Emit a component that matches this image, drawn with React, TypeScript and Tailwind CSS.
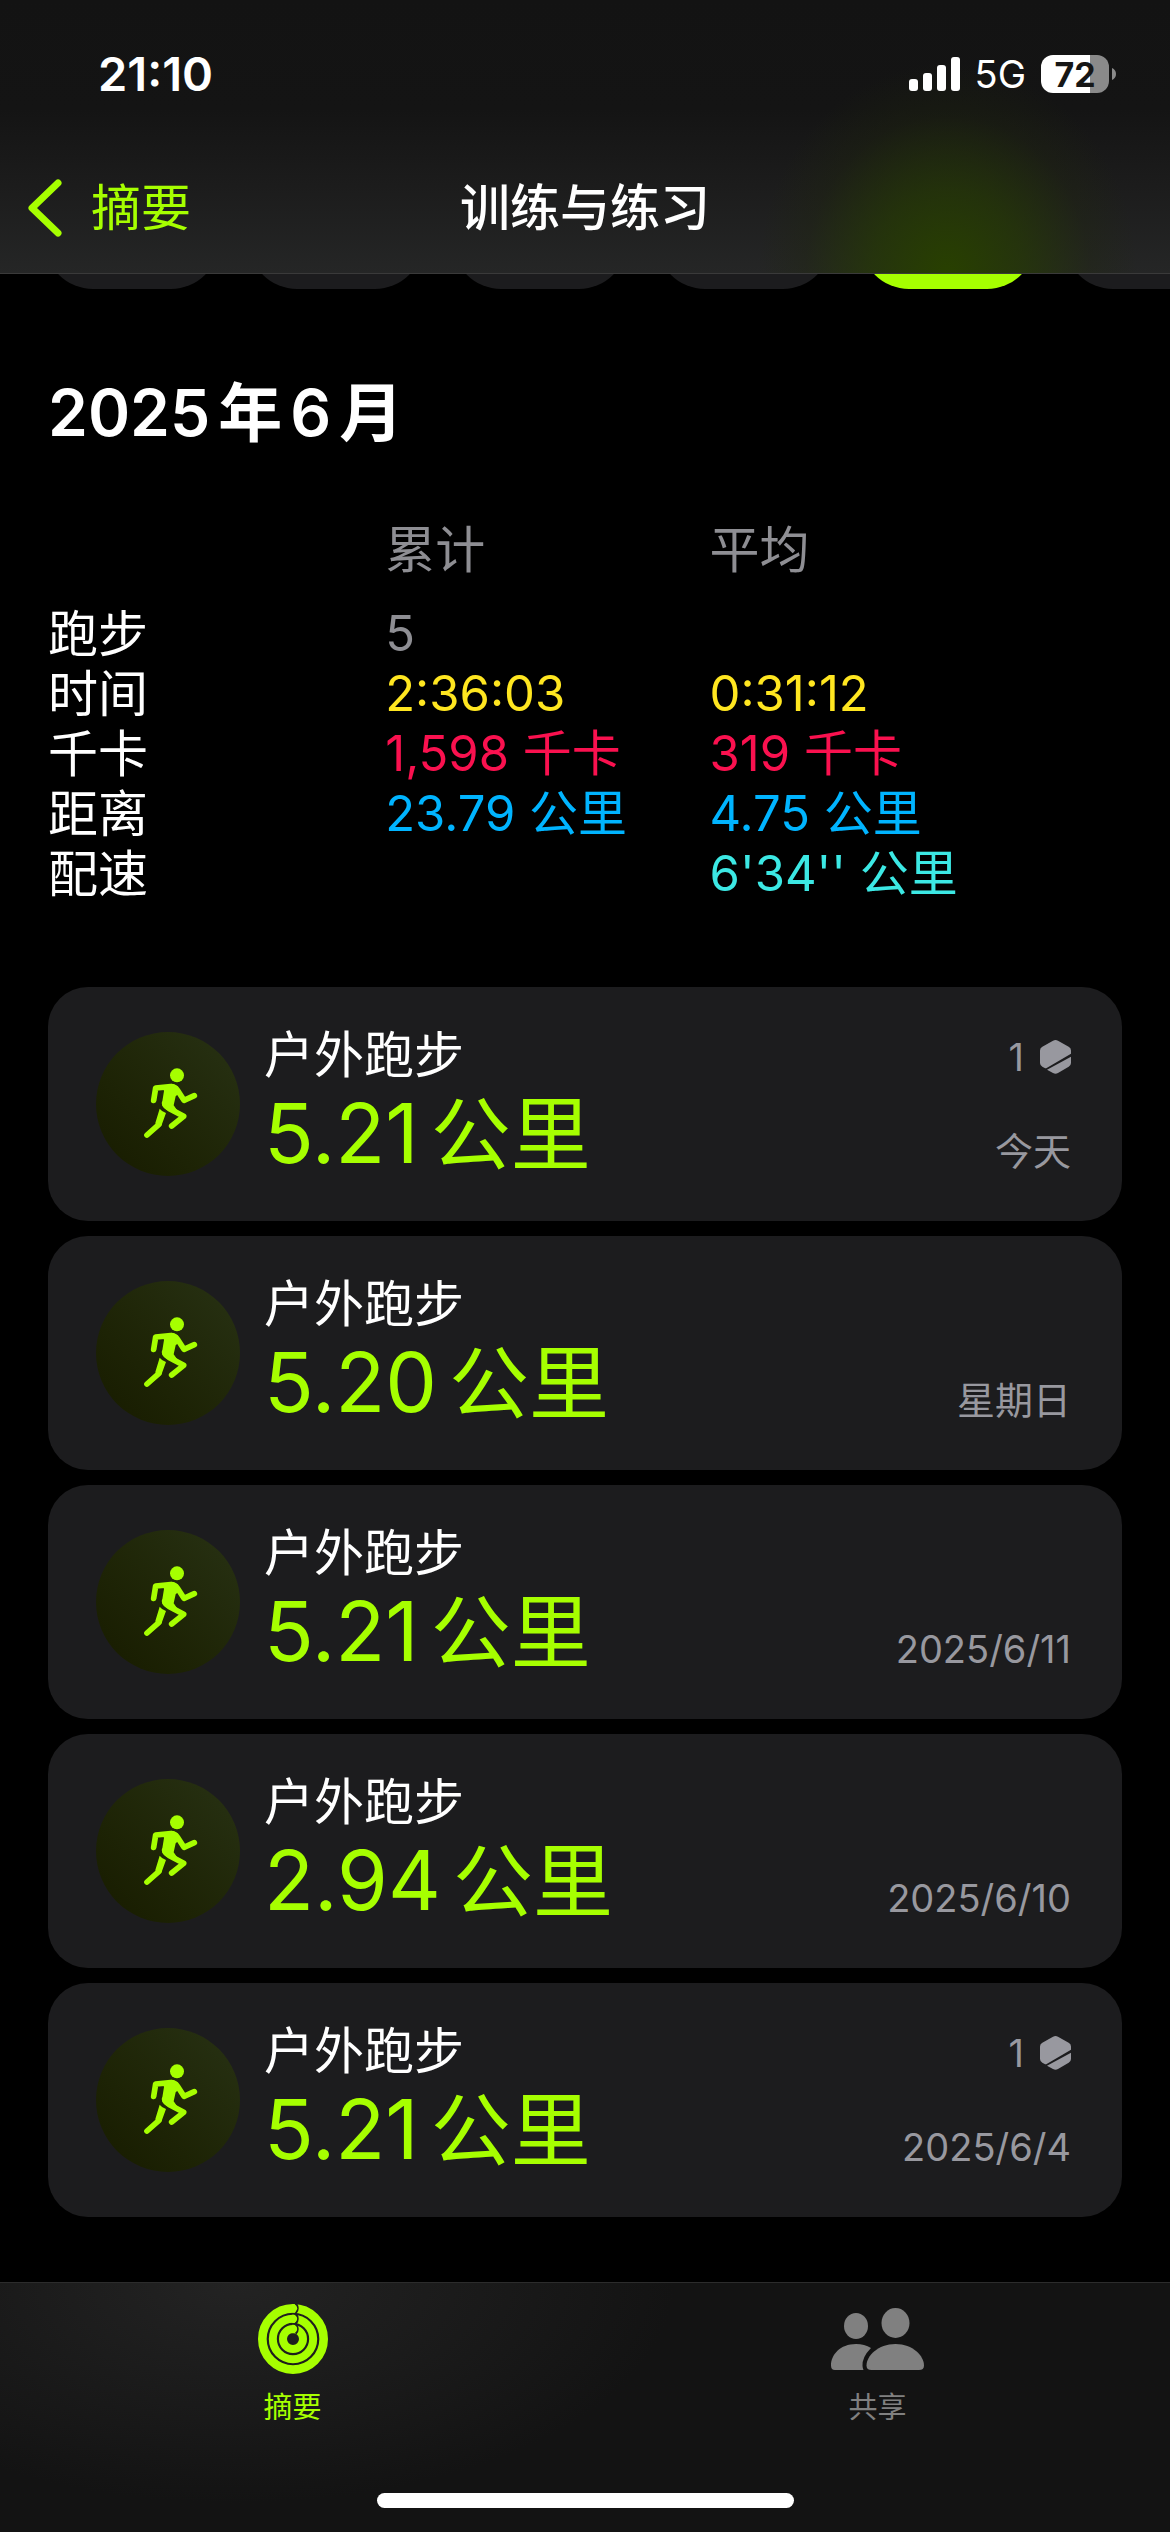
import clsx from "clsx";

type Workout = {
  id: number;
  distance: string;
  date: string;
  awards?: number;
};

const filters = [
  { id: 1, active: false },
  { id: 2, active: false },
  { id: 3, active: false },
  { id: 4, active: false },
  { id: 5, active: true },
  { id: 6, active: false },
];

const stats = [
  { label: "跑步", total: "5", average: "", color: "text-[#8e8e93]" },
  { label: "时间", total: "2:36:03", average: "0:31:12", color: "text-[#ffe620]" },
  { label: "千卡", total: "1,598 千卡", average: "319 千卡", color: "text-[#fa114f]" },
  { label: "距离", total: "23.79 公里", average: "4.75 公里", color: "text-[#00b4ff]" },
  { label: "配速", total: "", average: "6'34'' 公里", color: "text-[#3ce8e4]" },
];

const workouts: Workout[] = [
  { id: 1, distance: "5.21", date: "今天", awards: 1 },
  { id: 2, distance: "5.20", date: "星期日" },
  { id: 3, distance: "5.21", date: "2025/6/11" },
  { id: 4, distance: "2.94", date: "2025/6/10" },
  { id: 5, distance: "5.21", date: "2025/6/4", awards: 1 },
];

const SignalIcon = () => (
  <svg className="h-[34px] w-[51px]" viewBox="0 0 51 34" fill="currentColor">
    <rect x="0" y="22" width="9" height="12" rx="3" />
    <rect x="14" y="16" width="9" height="18" rx="3" />
    <rect x="28" y="8" width="9" height="26" rx="3" />
    <rect x="42" y="0" width="9" height="34" rx="3" />
  </svg>
);

const Battery = () => (
  <div className="flex items-center gap-[3px]">
    <div className="flex h-[38px] w-[68px] items-center justify-center rounded-xl bg-linear-to-r from-white from-72% to-[#8a8a8a] to-72% text-[34px] font-bold text-[#161616]">
      72
    </div>
    <svg className="h-3 w-1" viewBox="0 0 4 12" fill="#8a8a8a">
      <path d="M0 0c2.600 1 4 3.400 4 6s-1.400 5-4 6z" />
    </svg>
  </div>
);

const RunnerIcon = () => (
  <svg className="size-36" viewBox="48 36 432 432" fill="#a6ff00" stroke="none">
    <circle cx="291" cy="166" r="21" />
    <path d="M250 206l24-15q14 1 22 14l5 12-14 12-6 27 10 14-28 1q-19-9-17-21l6-37z" />
    <path d="M239 266q7 9 19 13l-12 33-13 13-7-16z" />
    <g fill="none" stroke="#a6ff00" strokeWidth="17" strokeLinecap="round" strokeLinejoin="round">
      <path d="M221 241l6-37 45-4q13 0 20 10l20 31 31-14" />
      <path d="M254 250q3 9 16 17l41 22-36 29" />
      <path d="M237 313l-36 32" />
    </g>
  </svg>
);

const AwardIcon = () => (
  <svg className="h-[34px] w-[31px]" viewBox="0 0 93 102" fill="currentColor">
    <path d="M39 2q7.500-4 15 0l32 18.500q7 4 7 11v9.500L20 84q-3 1.500-6 0l-7-4q-7-4-7-11V31.500q0-7 7-11z" />
    <path d="M93 50v19q0 7-7 11L54 99q-7.500 4-15 0L21 89z" />
  </svg>
);

const RingsIcon = () => (
  <svg className="size-[70px]" viewBox="-105 -105 210 210" fill="none">
    <g stroke="#a6ff00">
      <circle r="92" strokeWidth="26" />
      <circle r="60.500" strokeWidth="24" />
      <circle r="30" strokeWidth="24" />
    </g>
    {[92, 60.5, 30].map((r) => (
      <g key={r} transform={`translate(0 ${-r})`}>
        <path d="M8-14a20 20 0 0 1 0 28" stroke="#202020" strokeWidth="7" />
        <path d="M-2-12.500h2a12.500 12.500 0 0 1 0 25h-2z" fill="#a6ff00" />
      </g>
    ))}
  </svg>
);

const PeopleIcon = () => (
  <svg className="h-[62px] w-[93px]" viewBox="0 0 93 62" fill="currentColor">
    <ellipse cx="25" cy="18" rx="12" ry="13" />
    <ellipse cx="64.500" cy="15" rx="14" ry="15" />
    <path d="M40 40q-9 9-8.500 18 .2 2.500 1 4H4q-4 0-4-4.500C0 47 9 36 25 36q8.500 0 15 4z" />
    <path d="M64.500 36C82 36 93 48 93 57.500q0 4.500-5 4.500H40.500q-5 0-5-4.500C35.500 48 47 36 64.500 36z" />
  </svg>
);

const Header = () => (
  <header className="border-b border-[#3a3a3a] bg-[radial-gradient(190px_210px_at_81%_100%,#284000_0%,#263a04b3_40%,#20280c4d_75%,transparent_100%),linear-gradient(#131313_0%,#141414_40%,#1c1c1c_68%,#252626_100%)]">
    <div className="flex h-[148px] items-center justify-between pr-[54px] pl-[98px]">
      <time className="text-[47px] font-semibold">21:10</time>
      <div className="flex items-center gap-[15px]">
        <SignalIcon />
        <span className="text-[38px]">5G</span>
        <Battery />
      </div>
    </div>
    <nav className="grid h-[125px] grid-cols-3 items-start px-7 pt-[22px] text-[50px] leading-[76px]">
      <button className="flex items-center gap-[29px] text-[#a6ff00]">
        <svg className="h-[58px] w-[34px]" viewBox="0 0 34 58" fill="none">
          <path d="M30 4L4 29l26 25" stroke="currentColor" strokeWidth="7" strokeLinecap="round" strokeLinejoin="round" />
        </svg>
        摘要
      </button>
      <h1 className="text-center font-medium">训练与练习</h1>
    </nav>
  </header>
);

const Filters = () => (
  <div className="flex h-[15px] items-end gap-[30px] overflow-hidden pl-[45px]">
    {filters.map((filter) => (
      <button
        key={filter.id}
        aria-label={`筛选 ${filter.id}`}
        className={clsx("h-24 w-[174px] shrink-0 rounded-full", filter.active ? "bg-[#a6ff00]" : "bg-[#1c1c1e]")}
      />
    ))}
  </div>
);

const Summary = () => (
  <table className="mt-[65px] w-full table-fixed text-left text-[50px] leading-[60px]">
    <thead>
      <tr className="align-top text-[#8e8e93]">
        <td className="w-[31.400%]" />
        <th className="h-[84px] w-[30.200%] font-normal">累计</th>
        <th className="font-normal">平均</th>
      </tr>
    </thead>
    <tbody>
      {stats.map((row) => (
        <tr key={row.label} className={row.color}>
          <th className="h-[60px] font-normal text-white">{row.label}</th>
          <td className="text-[49px]">{row.total}</td>
          <td className="text-[49px]">{row.average}</td>
        </tr>
      ))}
    </tbody>
  </table>
);

const WorkoutCard = ({ workout }: { workout: Workout }) => (
  <li className="flex h-[234px] items-center rounded-[40px] bg-[#1c1c1e] pr-[51px] pl-12">
    <div className="rounded-full bg-linear-to-tr from-[#171b00] to-[#283214]">
      <RunnerIcon />
    </div>
    <div className="ml-6 flex-1">
      <h3 className="text-[50px] leading-[60px]">户外跑步</h3>
      <p className="flex items-baseline gap-3 text-[80px] leading-[98px] text-[#a6ff00]">
        <span className="text-[82px]">{workout.distance}</span>
        <span>公里</span>
      </p>
    </div>
    <div className="flex h-[142px] flex-col items-end justify-between text-[38px] leading-12 text-[#98989f]">
      <div className="flex items-center gap-4">
        {workout.awards && (
          <>
            <span>{workout.awards}</span>
            <AwardIcon />
          </>
        )}
      </div>
      <span>{workout.date}</span>
    </div>
  </li>
);

const TabBar = () => (
  <footer className="border-t border-[#2c2c2c] bg-[radial-gradient(440px_220px_at_20%_0%,#232323_0%,transparent_100%)] bg-[#131313]">
    <nav className="grid h-[210px] grid-cols-2 text-[29px]">
      <button className="flex flex-col items-center pt-[21px] text-[#a6ff00]">
        <RingsIcon />
        <span className="mt-3.5 leading-10">摘要</span>
      </button>
      <button className="flex flex-col items-center pt-[25px] text-[#808080]">
        <PeopleIcon />
        <span className="mt-4.5 leading-10">共享</span>
      </button>
    </nav>
    <div className="mx-auto mb-6 h-[15px] w-[417px] rounded-full bg-white" />
  </footer>
);

const App = () => {
  return (
    <div className="flex min-h-screen flex-col bg-black font-['Inter','Noto_Sans_CJK_SC',sans-serif] text-white">
      <Header />
      <Filters />
      <main className="flex-1 px-12 pb-[65px]">
        <h2 className="mt-[82px] flex items-baseline gap-2 text-[64px] leading-[84px] font-semibold">
          <span>2025</span>
          <span>年</span>
          <span>6</span>
          <span>月</span>
        </h2>
        <Summary />
        <ul className="mt-[83px] flex flex-col gap-[15px]">
          {workouts.map((workout) => (
            <WorkoutCard key={workout.id} workout={workout} />
          ))}
        </ul>
      </main>
      <TabBar />
    </div>
  );
};

export default App;
